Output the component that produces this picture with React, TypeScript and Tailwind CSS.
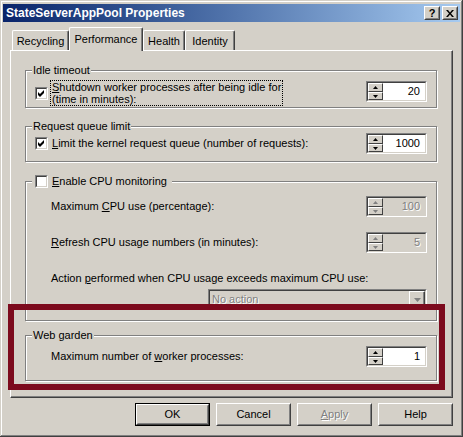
import React from "react";

const U = ({ children }: { children: React.ReactNode }) => (
  <span className="underline underline-offset-[1px] decoration-1">{children}</span>
);

function CheckBox({ checked }: { checked?: boolean }) {
  return (
    <div className="w-[13px] h-[13px] shrink-0 border border-t-[#808080] border-l-[#808080] border-b-white border-r-white">
      <div className="relative w-full h-full border border-t-[#404040] border-l-[#404040] border-b-[#d4d0c8] border-r-[#d4d0c8] bg-white">
        {checked && (
          <svg width="9" height="9" viewBox="0 0 9 9" className="absolute left-0 top-0">
            <path d="M1 3 L3 5 L7 1 L7 4 L3 8 L1 6 Z" fill="#000" />
          </svg>
        )}
      </div>
    </div>
  );
}

function Arrow({ up, disabled }: { up?: boolean; disabled?: boolean }) {
  const c = disabled ? "#808080" : "#000";
  return (
    <svg width="5" height="3" viewBox="0 0 5 3">
      {up ? <path d="M2.5 0 L5 3 L0 3 Z" fill={c} /> : <path d="M0 0 L5 0 L2.5 3 Z" fill={c} />}
    </svg>
  );
}

function SpinBtn({ up, disabled, h }: { up?: boolean; disabled?: boolean; h: string }) {
  return (
    <div className={`${h} w-full border border-t-white border-l-white border-b-[#404040] border-r-[#404040] bg-[#d4d0c8] flex items-center justify-center`}>
      <Arrow up={up} disabled={disabled} />
    </div>
  );
}

function Spinner({ value, disabled }: { value: string; disabled?: boolean }) {
  return (
    <div className="w-[61px] h-[21px] shrink-0 border border-t-[#808080] border-l-[#808080] border-b-white border-r-white">
      <div
        className={`flex h-full border border-t-[#404040] border-l-[#404040] border-b-[#d4d0c8] border-r-[#d4d0c8] ${
          disabled ? "bg-[#d4d0c8]" : "bg-white"
        }`}
      >
        <div className="flex flex-col w-[15px] shrink-0">
          <SpinBtn up disabled={disabled} h="h-[9px]" />
          <SpinBtn disabled={disabled} h="h-[8px]" />
        </div>
        <div
          className={`flex-1 text-right pr-[5px] leading-[17px] ${
            disabled ? "text-[#808080] [text-shadow:1px_1px_0_#fff]" : "text-black"
          }`}
        >
          {value}
        </div>
      </div>
    </div>
  );
}

function Group({
  legend,
  className,
  children,
}: {
  legend: React.ReactNode;
  className?: string;
  children?: React.ReactNode;
}) {
  return (
    <div
      className={`relative w-[412px] shrink-0 border border-[#808080] shadow-[inset_1px_1px_0_#fff,1px_1px_0_#fff] ${
        className ?? ""
      }`}
    >
      <div className="absolute left-[6px] -top-[7px] h-[13px] bg-[#d4d0c8] leading-[13px] flex items-center">
        {legend}
      </div>
      {children}
    </div>
  );
}

function Tab({ label, w, selected }: { label: string; w: string; selected?: boolean }) {
  return (
    <div
      className={`${w} ${
        selected ? "h-[24px] -mb-[1px] relative z-10 pt-[0px]" : "h-[20px] pt-[2px]"
      } shrink-0 bg-[#d4d0c8] border-t border-l border-r border-t-white border-l-white border-r-[#404040] rounded-tl-[2px] rounded-tr-[2px] shadow-[inset_-1px_0_0_#808080] flex items-center justify-center leading-[13px]`}
    >
      {label}
    </div>
  );
}

function Btn({
  children,
  def,
  disabled,
}: {
  children: React.ReactNode;
  def?: boolean;
  disabled?: boolean;
}) {
  return (
    <div className={`w-[75px] h-[23px] shrink-0 ${def ? "border border-black" : ""}`}>
      <div className="h-full border border-t-white border-l-white border-b-[#404040] border-r-[#404040]">
        <div
          className={`h-full border border-t-[#d4d0c8] border-l-[#d4d0c8] border-b-[#808080] border-r-[#808080] flex items-center justify-center ${
            disabled ? "text-[#808080] [text-shadow:1px_1px_0_#fff]" : "text-black"
          }`}
        >
          {children}
        </div>
      </div>
    </div>
  );
}

function TitleBtn({ children }: { children: React.ReactNode }) {
  return (
    <div className="w-[16px] h-[14px] border border-t-white border-l-white border-b-[#404040] border-r-[#404040] bg-[#d4d0c8]">
      <div className="h-full border border-t-[#d4d0c8] border-l-[#d4d0c8] border-b-[#808080] border-r-[#808080] flex items-center justify-center">
        {children}
      </div>
    </div>
  );
}

export default function App() {
  return (
    <div className="w-[463px] h-[437px] overflow-hidden bg-[#d4d0c8] text-[11px] text-black font-['Liberation_Sans',Arial,sans-serif] relative shadow-[inset_-1px_-1px_0_#404040,inset_1px_1px_0_#d4d0c8,inset_-2px_-2px_0_#808080,inset_2px_2px_0_#fff] pt-[4px] px-[3px]">
      {/* Title bar */}
      <div className="h-[18px] bg-linear-to-r from-[#0a246a] to-[#a6caf0] flex items-center justify-between pl-[3px] pr-[2px]">
        <span className="text-white font-bold text-[12px] leading-[18px]">StateServerAppPool Properties</span>
        <div className="flex gap-[2px]">
          <TitleBtn>
            <span className="font-bold text-[11px] leading-[10px]">?</span>
          </TitleBtn>
          <TitleBtn>
            <svg width="8" height="7" viewBox="0 0 8 7">
              <path d="M0 0h2l2 2.5 2-2.5h2l-3 3.5 3 3.5h-2l-2-2.5-2 2.5h-2l3-3.5z" fill="#000" />
            </svg>
          </TitleBtn>
        </div>
      </div>

      {/* Tabs */}
      <div className="flex items-end pl-[9px] mt-[5px] h-[23px]">
        <Tab label="Recycling" w="w-[57px]" />
        <Tab label="Performance" w="w-[74px]" selected />
        <Tab label="Health" w="w-[42px]" />
        <Tab label="Identity" w="w-[50px]" />
      </div>

      {/* Panel */}
      <div className="ml-[7px] w-[443px] h-[348px] border border-t-white border-l-white border-r-[#404040] border-b-[#404040] shadow-[inset_-1px_-1px_0_#808080] pt-[19px] pl-[14px] flex flex-col">
        {/* Idle timeout */}
        <Group legend={<span className="px-[1px]">Idle timeout</span>} className="h-[38px]">
          <div className="flex items-start justify-between pt-[9px] pl-[9px] pr-[9px]">
            <div className="flex items-center">
              <CheckBox checked />
              <div className="ml-[2px] border border-dotted border-black px-[1px] leading-[12px]">
                <U>S</U>hutdown worker processes after being idle for
                <br />
                (time in minutes):
              </div>
            </div>
            <div className="mt-[1px]">
              <Spinner value="20" />
            </div>
          </div>
        </Group>

        {/* Request queue limit */}
        <Group legend={<span className="px-[1px]">Request queue limit</span>} className="h-[36px] mt-[18px]">
          <div className="flex items-center justify-between pt-[6px] pl-[9px] pr-[9px] h-[27px]">
            <div className="flex items-center">
              <CheckBox checked />
              <span className="ml-[4px] leading-[13px]">
                <U>L</U>imit the kernel request queue (number of requests):
              </span>
            </div>
            <Spinner value="1000" />
          </div>
        </Group>

        {/* CPU monitoring */}
        <Group
          legend={
            <div className="flex items-center pl-[3px] pr-[5px]">
              <CheckBox />
              <span className="ml-[4px]">
                <U>E</U>nable CPU monitoring
              </span>
            </div>
          }
          className="h-[140px] mt-[19px]"
        >
          <div className="flex flex-col pt-[14px] pl-[25px] pr-[9px]">
            <div className="flex items-center justify-between h-[21px]">
              <span>
                Maximum <U>C</U>PU use (percentage):
              </span>
              <Spinner value="100" disabled />
            </div>
            <div className="flex items-center justify-between h-[21px] mt-[15px]">
              <span>
                <U>R</U>efresh CPU usage numbers (in minutes):
              </span>
              <Spinner value="5" disabled />
            </div>
            <div className="mt-[19px] leading-[13px]">
              Action <U>p</U>erformed when CPU usage exceeds maximum CPU use:
            </div>
            <div className="self-end mt-[4px] w-[219px] h-[21px] border border-t-[#808080] border-l-[#808080] border-b-white border-r-white">
              <div className="h-full flex border border-t-[#404040] border-l-[#404040] border-b-[#d4d0c8] border-r-[#d4d0c8] bg-[#d4d0c8]">
                <div className="flex-1 pl-[2px] leading-[17px] text-[#808080] [text-shadow:1px_1px_0_#fff]">No action</div>
                <div className="w-[16px] h-full border border-t-white border-l-white border-b-[#404040] border-r-[#404040] shadow-[inset_-1px_-1px_0_#808080] flex items-center justify-center">
                  <svg width="7" height="4" viewBox="0 0 7 4">
                    <path d="M0 0h7l-3.5 4z" fill="#808080" />
                  </svg>
                </div>
              </div>
            </div>
          </div>
        </Group>

        {/* Web garden */}
        <Group legend={<span className="px-[1px]">Web garden</span>} className="h-[46px] mt-[14px]">
          <div className="flex items-center justify-between mt-[10px] pl-[25px] pr-[9px] h-[21px]">
            <span>
              Maximum number of <U>w</U>orker processes:
            </span>
            <Spinner value="1" />
          </div>
        </Group>
      </div>

      {/* Buttons */}
      <div className="ml-[7px] w-[443px] mt-[5px] flex justify-end gap-[6px]">
        <Btn def>OK</Btn>
        <Btn>Cancel</Btn>
        <Btn disabled>
          <span>
            <U>A</U>pply
          </span>
        </Btn>
        <Btn>Help</Btn>
      </div>

      {/* Annotation rectangle */}
      <div className="absolute left-[8px] top-[304px] w-[437px] h-[86px] border-[6px] border-[#7c0a1d] pointer-events-none" />
    </div>
  );
}
